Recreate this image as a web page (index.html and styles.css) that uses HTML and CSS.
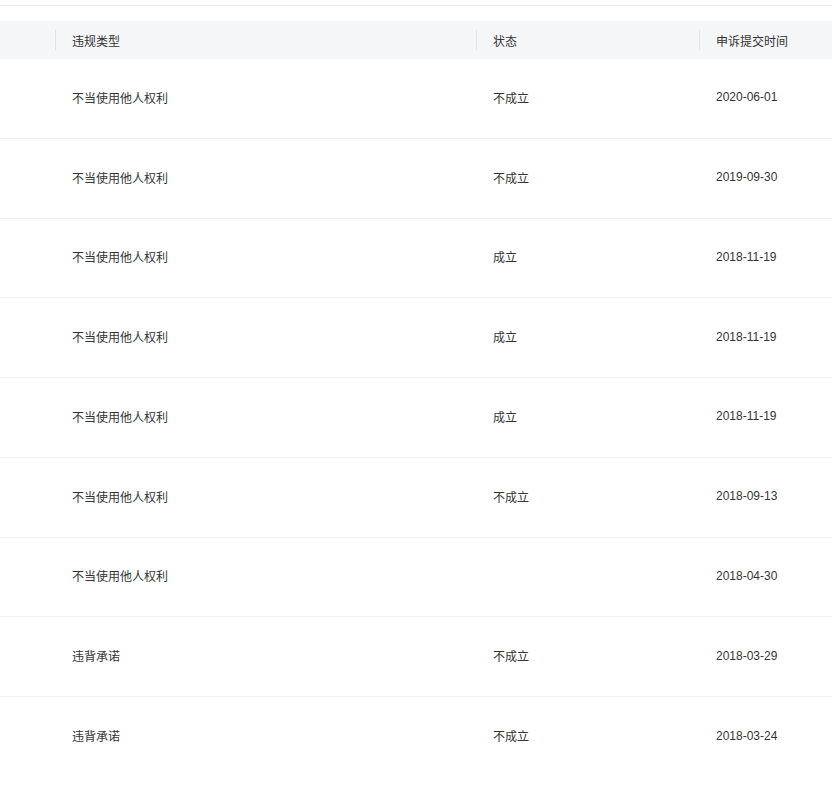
FILE: index.html
```html
<!DOCTYPE html>
<html lang="zh-CN">
<head>
<meta charset="utf-8">
<link rel="stylesheet" href="styles.css">
</head>
<body>
<div class="page">
  <div class="topline"></div>
  <div class="table">
    <div class="row head">
      <div class="cell c0"></div>
      <div class="cell c1"><span class="sep"></span>违规类型</div>
      <div class="cell c2"><span class="sep"></span>状态</div>
      <div class="cell c3"><span class="sep"></span>申诉提交时间</div>
    </div>
    <div class="row"><div class="cell c0"></div><div class="cell c1">不当使用他人权利</div><div class="cell c2">不成立</div><div class="cell c3">2020-06-01</div></div>
    <div class="row"><div class="cell c0"></div><div class="cell c1">不当使用他人权利</div><div class="cell c2">不成立</div><div class="cell c3">2019-09-30</div></div>
    <div class="row"><div class="cell c0"></div><div class="cell c1">不当使用他人权利</div><div class="cell c2">成立</div><div class="cell c3">2018-11-19</div></div>
    <div class="row"><div class="cell c0"></div><div class="cell c1">不当使用他人权利</div><div class="cell c2">成立</div><div class="cell c3">2018-11-19</div></div>
    <div class="row"><div class="cell c0"></div><div class="cell c1">不当使用他人权利</div><div class="cell c2">成立</div><div class="cell c3">2018-11-19</div></div>
    <div class="row"><div class="cell c0"></div><div class="cell c1">不当使用他人权利</div><div class="cell c2">不成立</div><div class="cell c3">2018-09-13</div></div>
    <div class="row"><div class="cell c0"></div><div class="cell c1">不当使用他人权利</div><div class="cell c2"></div><div class="cell c3">2018-04-30</div></div>
    <div class="row"><div class="cell c0"></div><div class="cell c1">违背承诺</div><div class="cell c2">不成立</div><div class="cell c3">2018-03-29</div></div>
    <div class="row last"><div class="cell c0"></div><div class="cell c1">违背承诺</div><div class="cell c2">不成立</div><div class="cell c3">2018-03-24</div></div>
  </div>
</div>
</body>
</html>
```
FILE: styles.css
```css
html, body {
  margin: 0;
  padding: 0;
  background: #fff;
}
.page {
  width: 832px;
  overflow: hidden;
  padding-top: 5px;
  font-family: "Liberation Sans", "Noto Sans CJK SC", sans-serif;
  font-size: 12px;
  color: #333;
}
.topline {
  height: 1px;
  background: #ebebeb;
  margin-bottom: 15px;
}
.table {
  display: flex;
  flex-direction: column;
}
.row {
  display: grid;
  grid-template-columns: 55px 421px 223px 140px;
  height: 79.75px;
  border-bottom: 1px solid #f0f0f0;
  box-sizing: border-box;
}
.row.last {
  border-bottom: none;
}
.row.head {
  height: 38px;
  background: #f5f6f8;
  border-bottom: none;
}
.cell {
  position: relative;
  display: flex;
  align-items: center;
  padding-left: 17px;
  padding-bottom: 2px;
  white-space: nowrap;
}
.head .cell {
  color: #333;
  padding-bottom: 0;
}
.sep {
  position: absolute;
  left: 0;
  top: 9px;
  bottom: 9px;
  width: 1px;
  background: #e3e4e6;
}
```
